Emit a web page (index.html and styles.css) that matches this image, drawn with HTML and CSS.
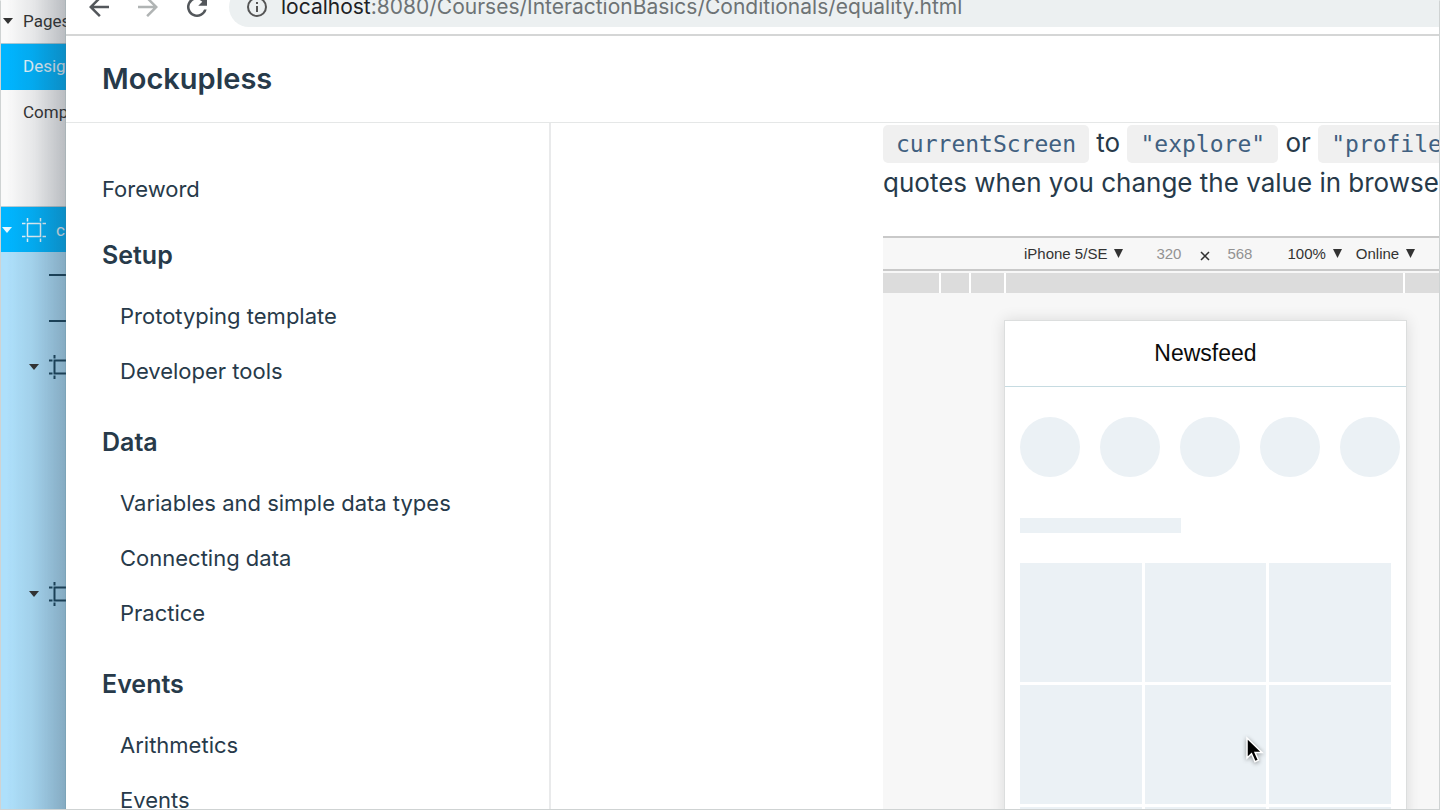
FILE: index.html
```html
<!DOCTYPE html>
<html lang="en">
<head>
<meta charset="utf-8">
<title>Mockupless</title>
<link rel="stylesheet" href="styles.css">
</head>
<body>
<svg class="defs" aria-hidden="true">
  <symbol id="artboard" viewBox="0 0 24 24">
    <path d="M5.500 5.500h13v13h-13zM5.500 0v3.500M18.500 0v3.500M5.500 20.500V24M18.500 20.500V24M0 5.500h3.500M0 18.500h3.500M20.500 5.500H24M20.500 18.500H24" fill="none" stroke="currentColor"/>
  </symbol>
  <symbol id="caret" viewBox="0 0 10 6"><path d="M0 0h10L5 6z" fill="currentColor"/></symbol>
  <symbol id="drop" viewBox="0 0 9 9"><path d="M0 0h9L4.500 9z" fill="currentColor"/></symbol>
</svg>
<div class="desktop">
  <aside class="layers" aria-label="Pages and layers">
    <div class="pages">
      <div class="page-row page-title"><svg class="caret"><use href="#caret"/></svg><span>Pages</span></div>
      <div class="page-row selected"><span>Design</span></div>
      <div class="page-row"><span>Components</span></div>
    </div>
    <div class="tree">
      <div class="tree-row root"><svg class="caret"><use href="#caret"/></svg><svg class="board"><use href="#artboard"/></svg><span>c</span></div>
      <div class="tree-row leaf"><i class="line"></i></div>
      <div class="tree-row leaf"><i class="line"></i></div>
      <div class="tree-row group"><svg class="caret"><use href="#caret"/></svg><svg class="board"><use href="#artboard"/></svg></div>
      <div class="tree-space"></div>
      <div class="tree-row group"><svg class="caret"><use href="#caret"/></svg><svg class="board"><use href="#artboard"/></svg></div>
      <div class="tree-space"></div>
      <div class="tree-row group"><svg class="caret"><use href="#caret"/></svg><svg class="board"><use href="#artboard"/></svg></div>
    </div>
  </aside>

  <div class="browser">
    <div class="toolbar">
      <button class="tool" aria-label="Back"><svg viewBox="0 0 24 24"><path d="M20 11H7.830l5.590-5.590L12 4l-8 8 8 8 1.410-1.410L7.830 13H20z"/></svg></button>
      <button class="tool disabled" aria-label="Forward" disabled><svg viewBox="0 0 24 24"><path d="M4 13h12.170l-5.590 5.590L12 20l8-8-8-8-1.410 1.410L16.170 11H4z"/></svg></button>
      <button class="tool reload" aria-label="Reload"><svg viewBox="0 0 24 24"><path d="M17.650 6.350A8 8 0 1 0 19.730 14h-2.080A6 6 0 1 1 12 6c1.660 0 3.140.69 4.220 1.780L13 11h7V4z"/></svg></button>
      <div class="address">
        <svg class="info" viewBox="0 0 22 22"><circle cx="11" cy="11" r="9" fill="none" stroke="currentColor" stroke-width="2"/><path d="M10 10h2v6h-2zM10 6h2v2h-2z" fill="currentColor"/></svg>
        <span class="url"><b>localhost</b>:8080/Courses/InteractionBasics/Conditionals/equality.html</span>
      </div>
    </div>
    <header class="site-header"><h1>Mockupless</h1></header>
    <div class="content">
      <nav class="sidebar">
        <a class="foreword" href="#foreword">Foreword</a>
        <h2>Setup</h2>
        <a href="#template">Prototyping template</a>
        <a href="#tools">Developer tools</a>
        <h2>Data</h2>
        <a href="#variables">Variables and simple data types</a>
        <a href="#connecting">Connecting data</a>
        <a href="#practice">Practice</a>
        <h2>Events</h2>
        <a href="#arithmetics">Arithmetics</a>
        <a href="#events">Events</a>
      </nav>
      <main class="article">
        <p><code>currentScreen</code> to <code>"explore"</code> or <code>"profile"</code><br>quotes when you change the value in browser</p>
        <div class="devtools">
          <div class="device-bar">
            <button class="device">iPhone 5/SE <svg class="drop"><use href="#drop"/></svg></button>
            <span class="dim">320</span>
            <svg class="times" viewBox="0 0 10 10"><path d="M1 1l8 8M9 1L1 9" stroke="currentColor" stroke-width="1.500"/></svg>
            <span class="dim">568</span>
            <button class="zoom">100% <svg class="drop"><use href="#drop"/></svg></button>
            <button>Online <svg class="drop"><use href="#drop"/></svg></button>
          </div>
          <div class="ruler"><i></i><i></i><i></i><i></i><i></i></div>
          <div class="stage">
            <section class="phone">
              <h3>Newsfeed</h3>
              <div class="stories"><i></i><i></i><i></i><i></i><i></i></div>
              <div class="caption"></div>
              <div class="photos"><i></i><i></i><i></i><i></i><i></i><i></i><i></i><i></i><i></i></div>
            </section>
          </div>
        </div>
      </main>
    </div>
  </div>
  <svg class="pointer" viewBox="0 0 18 26"><path d="M2 1v20l4.500-4.300 3.500 8 3.500-1.500-3.400-7.700H17z" fill="#000" stroke="#fff" stroke-width="1.500"/></svg>
</div>
</body>
</html>
```
FILE: styles.css
```css
* { box-sizing: border-box; }
body { margin: 0; color: #273a4a; font-family: Inter, "Liberation Sans", sans-serif; }
button { padding: 0; border: 0; background: none; color: inherit; font: inherit; }
h1, h2, h3, p { margin: 0; }
i { display: block; }
.defs { position: absolute; width: 0; height: 0; }
.desktop { position: relative; display: flex; height: 100vh; overflow: hidden; }
.desktop::after { content: ""; position: absolute; inset: 0; border: 1px solid #cfd3d3; border-top-color: transparent; pointer-events: none; }

.layers { position: relative; flex: none; width: 66px; overflow: hidden; font: 17px/44px Roboto, sans-serif; white-space: nowrap; }
.layers::after { content: ""; position: absolute; inset: 0; border-right: 1px solid rgba(50, 75, 85, .4); background: linear-gradient(to right, transparent 10%, rgba(40, 50, 65, .09) 50%, rgba(40, 50, 65, .3)); }
.pages { display: flex; flex-direction: column; height: 207px; border-bottom: 1px solid #b9cdd6; background: #fafafa; color: #333; }
.page-row { flex: 0 0 46px; padding-left: 23px; }
.page-title { display: flex; flex-basis: 44px; align-items: center; gap: 10px; padding: 0 0 2px 3px; border-bottom: 1px solid #a9cbd8; line-height: 40px; }
.page-row.selected { background: #00b5ff; color: #e3f6ff; }
.caret { flex: none; width: 10px; height: 6px; }
.board { flex: none; width: 24px; height: 24px; }
.tree { height: 100vh; background: #aee0fb; color: #17455e; }
.tree-row { display: flex; align-items: center; height: 46px; }
.tree-row.root { gap: 10px; height: 45px; padding-left: 2px; background: #00b5ff; color: #e8f8ff; }
.board { stroke-width: 1.5px; }
.leaf { padding-left: 49px; }
.line { width: 24px; height: 2px; background: currentColor; }
.group { gap: 10px; padding-left: 29px; }
.group .board { stroke-width: 2px; }
.group .caret { color: #333; }
.tree-space { height: 181px; }

.browser { display: flex; flex: 1; flex-direction: column; min-width: 0; background: #fff; }
.toolbar { display: flex; flex: none; align-items: flex-end; height: 36px; padding: 0 0 7px 18px; border-bottom: 2px solid #d5d6d6; overflow: hidden; }
.tool { display: flex; flex: none; align-items: center; width: 30px; height: 40px; margin-right: 19px; color: #53575b; }
.tool svg { width: 30px; height: 30px; fill: currentColor; }
.tool.disabled { color: #b0b4b4; }
.reload { margin-right: 17px; }
.address { display: flex; flex: 1; align-items: center; gap: 13px; height: 40px; padding-left: 17px; border-radius: 20px 0 0 20px; background: #ecf0f1; color: #6d7375; font-size: 21px; line-height: 40px; }
.info { width: 22px; height: 22px; color: #555; }
.url b { color: #202124; font-weight: 400; }
.site-header { flex: none; padding: 22px 36px; border-bottom: 1px solid #e5e7e7; }
h1 { font-size: 29px; font-weight: 600; line-height: 42px; }
.content { display: flex; flex: 1; min-height: 0; overflow: hidden; }
.sidebar { display: flex; flex: none; flex-direction: column; width: 485px; padding: 44px 36px 0; border-right: 2px solid #e9eaeb; }
.sidebar a { flex: none; padding-left: 18px; color: inherit; font-size: 22px; line-height: 55px; text-decoration: none; }
.sidebar .foreword { padding-left: 0; line-height: 45px; }
.sidebar h2 { flex: none; margin: 26px 0 16px; font-size: 25px; font-weight: 600; line-height: 35px; }

.article { flex: 1; min-width: 0; padding-left: 332px; overflow: hidden; white-space: nowrap; }
.article p { font-size: 26px; line-height: 40px; }
code { padding: 6px 13px; border-radius: 5px; background: #f0f0f0; color: #416080; font: 23px/1 "DejaVu Sans Mono", monospace; }
.devtools { margin-top: 33px; border-top: 2px solid #c9c9c9; background: #f7f7f7; }
.device-bar { display: flex; align-items: center; height: 33px; padding-left: 141px; border-bottom: 2px solid #c9c9c9; color: #333; font: 15px/30px "Liberation Sans", sans-serif; }
.device-bar button { display: flex; align-items: center; gap: 7px; }
.drop { width: 9px; height: 9px; }
.dim { color: #929292; }
.device { margin-right: 33px; }
.times { width: 10px; height: 10px; margin: 4px 17px 0 19px; }
.zoom { margin: 0 14px 0 35px; }
.ruler { display: grid; grid-template-columns: 56px 28px 33px 397px 1fr; gap: 2px; margin-top: 2px; height: 20px; background: #fff; }
.ruler i { background: #dcdcdc; }
.stage { display: flex; padding: 27px 0 0 121px; }
.phone { flex: none; width: 403px; padding-bottom: 30px; border: 1px solid #dcdede; background: #fff; box-shadow: 0 0 14px rgba(0, 0, 0, .12); }
h3 { border-bottom: 1px solid #c6dbe1; color: #0b0b0b; font: 23px/65px "Liberation Sans", sans-serif; text-align: center; }
.stories { display: flex; gap: 20px; padding: 30px 15px 0; }
.stories i { flex: none; width: 60px; height: 60px; border-radius: 50%; background: #ebf1f5; }
.caption { width: 161px; height: 15px; margin: 41px 15px 30px; background: #ebf1f5; }
.photos { display: grid; grid-template-columns: repeat(3, 1fr); grid-auto-rows: 119px; gap: 3px; padding: 0 15px; }
.photos i { background: #ebf1f5; }
.pointer { position: absolute; left: 1245px; top: 737px; width: 18px; height: 26px; overflow: visible; filter: drop-shadow(0 1px 2px rgba(0, 0, 0, .4)); }
```
